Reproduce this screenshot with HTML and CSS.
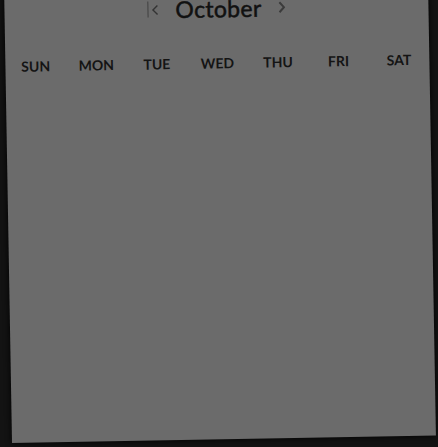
FILE: index.html
```html
<!DOCTYPE html>
<html lang="en-US">
    <head>
        <meta charset="utf-8">
        <title>Calendar</title>
        <link rel="stylesheet" href="styles.css">
    </head>
    <body>
        <div class="calendar">
            <div class="month-nav">
                <span class="nav-btn prev">
                    <span class="caret-line"></span>
                    <svg width="7" height="11" viewBox="0 0 7 11"><path d="M6 1 L1.5 5.5 L6 10" fill="none" stroke="#333" stroke-width="1.4"/></svg>
                </span>
                <span class="month-name">October</span>
                <span class="nav-btn next">
                    <svg width="7" height="12" viewBox="0 0 7 12"><path d="M1 1 L5.5 6 L1 11" fill="none" stroke="#3b3b3b" stroke-width="2"/></svg>
                </span>
            </div>
            <div class="weekdays">
                <div>SUN</div>
                <div>MON</div>
                <div>TUE</div>
                <div>WED</div>
                <div>THU</div>
                <div>FRI</div>
                <div>SAT</div>
            </div>
        </div>
    </body>
</html>
```

FILE: styles.css
```css
html, body {
    margin: 0;
    height: 100%;
    overflow: hidden;
    background-color: #131313;
    font-family: Lato, "Noto Sans", sans-serif;
}

.calendar {
    width: 424px;
    height: 458px;
    margin: -15px 0 0 12px;
    background: #6b6b6b;
    transform: rotate(-1deg);
    transform-origin: 0 100%;
    box-shadow: 0 0 6px #000;
}

.month-nav {
    height: 54px;
    display: flex;
    align-items: center;
    justify-content: center;
    color: #111;
}

.nav-btn {
    display: flex;
    align-items: center;
}

.prev {
    gap: 3px;
    margin-right: 17px;
}

.next {
    margin-left: 17px;
}

.caret-line {
    width: 1px;
    height: 16px;
    background: #404040;
}

.month-name {
    font-size: 23px;
    line-height: 1;
    letter-spacing: 0.3px;
    -webkit-text-stroke: 0.5px #111;
}

.weekdays {
    display: grid;
    grid-template-columns: repeat(7, 1fr);
    margin-top: 18px;
    text-align: center;
    font-size: 14px;
    font-weight: bold;
    line-height: 20px;
    color: #141414;
}
```
